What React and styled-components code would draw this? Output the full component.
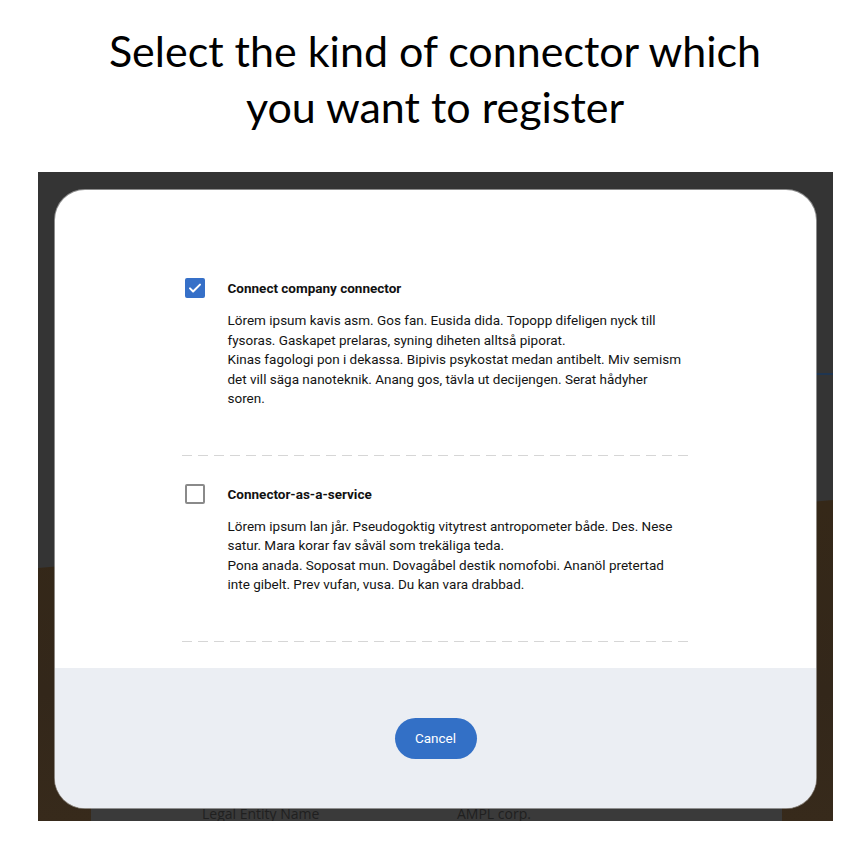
import { useState } from "react";
import styled, { createGlobalStyle } from "styled-components";

const GlobalStyle = createGlobalStyle`
  html, body {
    margin: 0;
    padding: 0;
    background: #ffffff;
  }
  body {
    width: 862px;
    height: 868px;
    overflow: hidden;
    font-family: "Roboto", "Liberation Sans", sans-serif;
  }
`;

const Page = styled.div`
  display: flex;
  flex-direction: column;
  align-items: center;
  padding-top: 23px;
`;

const Heading = styled.h1`
  margin: 0 0 0 8px;
  width: 760px;
  text-align: center;
  font-family: "Lato", "Open Sans", sans-serif;
  font-weight: 400;
  font-size: 43px;
  line-height: 56px;
  color: #000;
`;

const Stage = styled.div`
  position: relative;
  align-self: flex-start;
  margin-top: 37px;
  margin-left: 38px;
  width: 795px;
  height: 649px;
  box-sizing: border-box;
  padding: 18px 17px 13px;
  background: #343434;
  overflow: hidden;
`;

/* dimmed page that lies under the dialog */
const Photo = styled.div`
  position: absolute;
  left: 0;
  right: 0;
  top: 328px;
  bottom: 0;
  background: linear-gradient(180deg, #352818 0%, #33271a 60%, #372a1b 100%);
  clip-path: polygon(0 68px, 100% 0, 100% 100%, 0 100%);
`;

const UnderCard = styled.div`
  position: absolute;
  left: 53px;
  width: 691px;
  top: 560px;
  bottom: 0;
  background: #3a3a3a;
  display: flex;
  align-items: flex-end;
  box-sizing: border-box;
  font-family: "Open Sans", sans-serif;
  font-size: 14px;
  color: #202020;
`;

const UnderLabel = styled.span`
  box-sizing: border-box;
  width: ${(p) => p.$w}px;
  padding-left: ${(p) => p.$pl}px;
  line-height: 18px;
  margin-bottom: -2px;
  white-space: nowrap;
`;

const SideText = styled.div`
  position: absolute;
  left: 760px;
  top: 147px;
  width: 120px;
  font-family: "Open Sans", sans-serif;
  font-size: 14px;
  line-height: 18px;
  color: #181818;
  text-align: right;
  padding: 0 50px 18px 0;
  box-sizing: border-box;
  border-bottom: 2px solid #1f3550;
`;

const Dialog = styled.div`
  position: relative;
  height: 100%;
  display: flex;
  flex-direction: column;
  background: #ffffff;
  border-radius: 30px;
  overflow: hidden;
  box-shadow: 0 0 0 1px rgba(200, 200, 200, 0.6);
`;

const Body = styled.div`
  flex: 1;
  display: flex;
  flex-direction: column;
  align-items: center;
  padding-top: 88px;
`;

const Option = styled.div`
  width: 508px;
  box-sizing: border-box;
  display: flex;
  gap: 23px;
  padding: 0 0 47px 3px;
  margin-bottom: ${(p) => p.$gap}px;
  background-image: linear-gradient(90deg, #d6d6d6 0 10px, transparent 10px 16px);
  background-size: 16px 1px;
  background-repeat: repeat-x;
  background-position: 0 100%;
`;

const Box = styled.button`
  flex: none;
  width: 20px;
  height: 20px;
  padding: 0;
  margin: 0;
  box-sizing: border-box;
  border-radius: 2px;
  border: 2px solid ${(p) => (p.$on ? "#3670c8" : "#8a8a8a")};
  background: ${(p) => (p.$on ? "#3670c8" : "#ffffff")};
  display: flex;
  align-items: center;
  justify-content: center;
  cursor: pointer;
`;

const Texts = styled.div`
  width: 460px;
  display: flex;
  flex-direction: column;
`;

const OptionTitle = styled.div`
  font-size: 13.5px;
  font-weight: 700;
  line-height: 20px;
  color: #111;
  margin-bottom: 13px;
`;

const OptionText = styled.p`
  margin: 0;
  font-size: 13.5px;
  line-height: 19.5px;
  color: #141414;
`;

const Footer = styled.div`
  height: 140px;
  flex: none;
  background: #ebeef3;
  display: flex;
  align-items: center;
  justify-content: center;
`;

const CancelButton = styled.button`
  width: 82px;
  height: 41px;
  border: none;
  border-radius: 21px;
  background: #3370c6;
  color: #ffffff;
  font-family: "Roboto", "Liberation Sans", sans-serif;
  font-size: 13.5px;
  cursor: pointer;
`;

const options = [
  {
    title: "Connect company connector",
    lines: [
      "Lörem ipsum kavis asm. Gos fan. Eusida dida. Topopp difeligen nyck till fysoras. Gaskapet prelaras, syning diheten alltså piporat.",
      "Kinas fagologi pon i dekassa. Bipivis psykostat medan antibelt. Miv semism det vill säga nanoteknik. Anang gos, tävla ut decijengen. Serat hådyher soren.",
    ],
    gap: 28,
  },
  {
    title: "Connector-as-a-service",
    lines: [
      "Lörem ipsum lan jår. Pseudogoktig vitytrest antropometer både. Des. Nese satur. Mara korar fav såväl som trekäliga teda.",
      "Pona anada. Soposat mun. Dovagåbel destik nomofobi. Ananöl pretertad inte gibelt. Prev vufan, vusa. Du kan vara drabbad.",
    ],
    gap: 0,
  },
];

function Check() {
  return (
    <svg width="14" height="14" viewBox="0 0 14 14" fill="none">
      <path d="M2 7.4l3.1 3.1L12 3.6" stroke="#fff" strokeWidth="2" strokeLinecap="round" strokeLinejoin="round" />
    </svg>
  );
}

export default function App() {
  const [selected, setSelected] = useState(0);
  return (
    <>
      <GlobalStyle />
      <Page>
        <Heading>
          Select the kind of connector which
          <br />
          you want to register
        </Heading>
        <Stage>
          <Photo />
          <SideText>
            erfi
            <br />
            ntri
          </SideText>
          <UnderCard>
            <UnderLabel $w={366} $pl={111}>Legal Entity Name</UnderLabel>
            <UnderLabel $w={200} $pl={0}>AMPL corp.</UnderLabel>
          </UnderCard>
          <Dialog>
            <Body>
              {options.map((o, i) => (
                <Option key={o.title} $gap={o.gap}>
                  <Box $on={selected === i} onClick={() => setSelected(i)}>
                    {selected === i && <Check />}
                  </Box>
                  <Texts>
                    <OptionTitle>{o.title}</OptionTitle>
                    {o.lines.map((l) => (
                      <OptionText key={l}>{l}</OptionText>
                    ))}
                  </Texts>
                </Option>
              ))}
            </Body>
            <Footer>
              <CancelButton>Cancel</CancelButton>
            </Footer>
          </Dialog>
        </Stage>
      </Page>
    </>
  );
}
